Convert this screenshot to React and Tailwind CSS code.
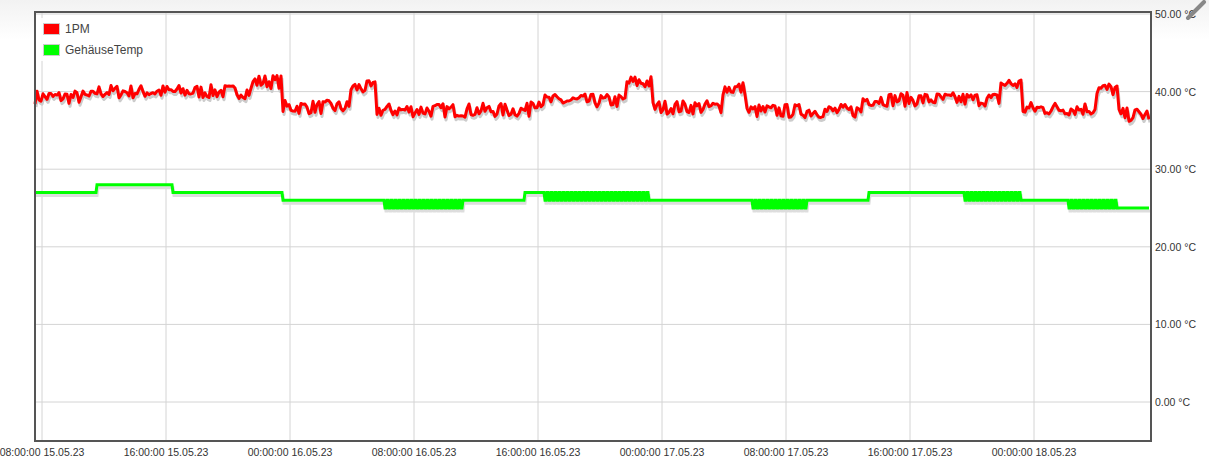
import React from "react";

const L = 35, R = 1151, T = 12, B = 441;
const yv = (v) => 402 - v * 7.76;

function rng(seed) {
  let s = seed;
  return () => {
    s = (s * 16807) % 2147483647;
    return (s - 1) / 2147483646;
  };
}

const redSegs = [
  [35, 95, 39.3], [95, 252, 40], [252, 282, 41.3], [282, 350, 38], [350, 376, 40.5],
  [376, 530, 37.6], [530, 627, 38.8], [627, 652, 41.2], [652, 722, 38], [722, 746, 40.4],
  [746, 862, 37.5], [862, 1000, 39], [1000, 1022, 41], [1022, 1096, 37.8], [1096, 1118, 40.3], [1118, 1151, 37],
];
const greenSegs = [
  [35, 96, 27], [96, 172, 28], [172, 282, 27], [282, 382, 26], [382, 462, 25.5, true],
  [462, 525, 26], [525, 545, 27], [545, 648, 26.5, true], [648, 750, 26], [750, 808, 25.5, true],
  [808, 868, 26], [868, 962, 27], [962, 1022, 26.5, true], [1022, 1068, 26], [1068, 1116, 25.5, true], [1116, 1151, 25],
];

function redPath() {
  const r = rng(7);
  const pts = [];
  for (let x = 35; x <= 1150; x += 2) {
    const seg = redSegs.find((s) => x >= s[0] && x < s[1]) || redSegs[redSegs.length - 1];
    pts.push(`${x},${yv(seg[2] + (r() - 0.5) * 1.8).toFixed(1)}`);
  }
  return "M" + pts.join(" L");
}

function greenPath() {
  const pts = [];
  let prev = null;
  let k = 0;
  for (let x = 35; x <= 1150; x += 2) {
    const seg = greenSegs.find((s) => x >= s[0] && x < s[1]) || greenSegs[greenSegs.length - 1];
    k++;
    const v = seg[3] ? (k % 2 ? seg[2] + 0.5 : seg[2] - 0.5) : seg[2];
    const y = yv(v).toFixed(1);
    if (prev !== null && prev !== y) pts.push(`${x - 1},${prev}`);
    pts.push(`${x},${y}`);
    prev = y;
  }
  return "M" + pts.join(" L");
}

const gridX = [42, 166, 290, 414, 538, 662, 786, 910, 1034];
const timeLabels = [
  "08:00:00 15.05.23", "16:00:00 15.05.23", "00:00:00 16.05.23", "08:00:00 16.05.23",
  "16:00:00 16.05.23", "00:00:00 17.05.23", "08:00:00 17.05.23", "16:00:00 17.05.23", "00:00:00 18.05.23",
];
const yTicks = [50, 40, 30, 20, 10, 0];

export default function App() {
  const red = redPath();
  const green = greenPath();
  return (
    <div className="relative w-[1209px] h-[465px] bg-white overflow-hidden" style={{ fontFamily: '"Liberation Sans", Arial, sans-serif' }}>
      <div className="absolute inset-x-0 top-0 h-[40px] bg-gradient-to-b from-[#f2f2f2] to-white" />
      <svg width="1209" height="465" className="absolute inset-0">
        <rect x={L} y={T} width={R - L} height={B - T} fill="white" />
        {gridX.map((x) => (
          <line key={x} x1={x} y1={T} x2={x} y2={B} stroke="#d4d4d4" strokeWidth="1" />
        ))}
        {yTicks.map((v) => (
          <line key={v} x1={L} y1={yv(v)} x2={R} y2={yv(v)} stroke="#d4d4d4" strokeWidth="1" />
        ))}
        <path d={red} transform="translate(1,3)" fill="none" stroke="#cccccc" strokeWidth="3" strokeLinejoin="round" />
        <path d={green} transform="translate(1,3)" fill="none" stroke="#dddddd" strokeWidth="3" />
        <path d={red} fill="none" stroke="#ff0000" strokeWidth="3" strokeLinejoin="round" />
        <path d={green} fill="none" stroke="#00ff00" strokeWidth="3" />
        <path d={`M${L} ${T} L${R} ${T} L${R} ${B} L${L} ${B} Z`} fill="none" stroke="#555" strokeWidth="2" />
        {yTicks.map((v) => (
          <text key={v} x={1155} y={yv(v) + 4} fontSize="10.5" fill="#333">{v.toFixed(2)} °C</text>
        ))}
        {timeLabels.map((t, i) => (
          <text key={t} x={gridX[i]} y={456} fontSize="10.5" fill="#333" textAnchor="middle">{t}</text>
        ))}
        <line x1="1188" y1="18" x2="1204" y2="2" stroke="#888" strokeWidth="4" strokeLinecap="round" />
      </svg>
      <div className="absolute left-[40px] top-[18px] w-[110px] bg-white/90 flex flex-col gap-[3px] py-[2px] px-[3px] text-[12px] text-[#444]">
        <div className="flex items-center gap-[5px]">
          <span className="w-[17px] h-[12px] bg-[#ff0000] border border-[#ccc]" />1PM
        </div>
        <div className="flex items-center gap-[5px]">
          <span className="w-[17px] h-[12px] bg-[#00ff00] border border-[#ccc]" />GehäuseTemp
        </div>
      </div>
    </div>
  );
}
